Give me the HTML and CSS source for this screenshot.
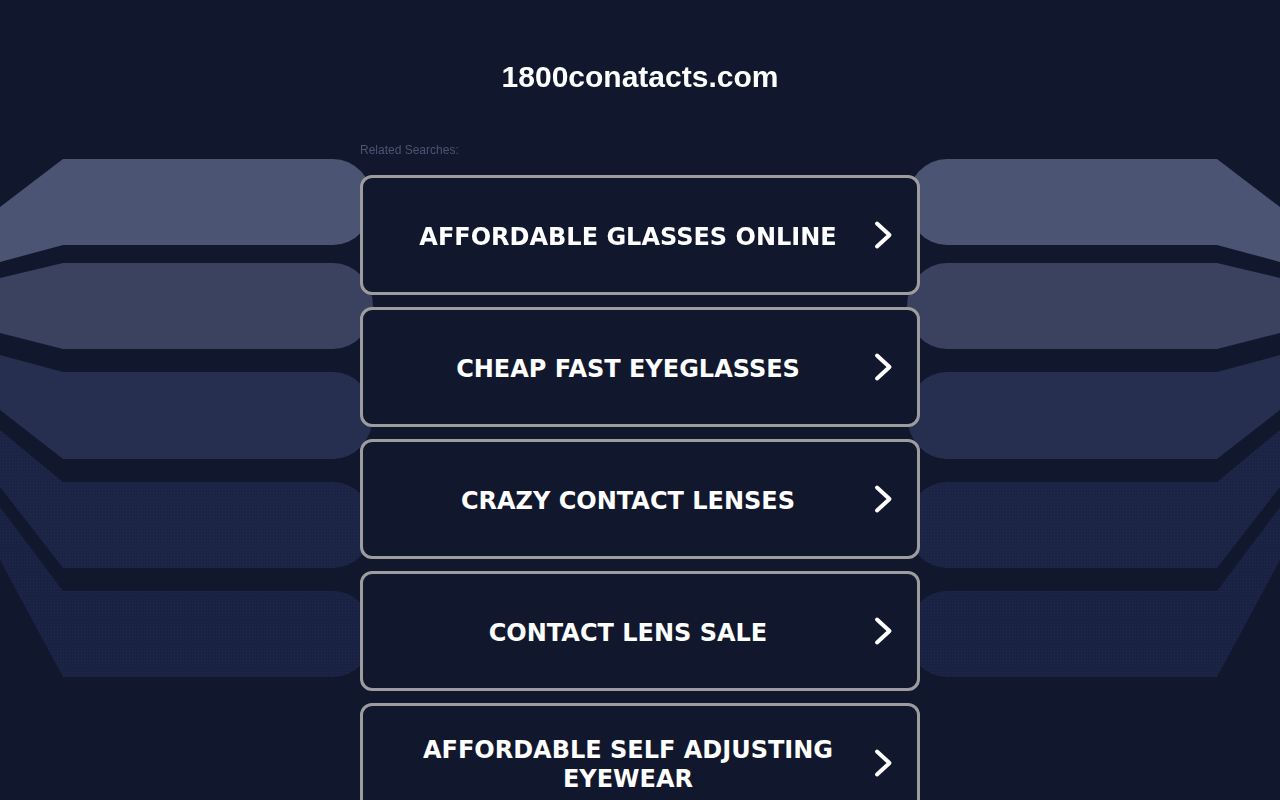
FILE: index.html
```html
<!DOCTYPE html>
<html lang="en">
<head>
<meta charset="utf-8">
<title>1800conatacts.com</title>
<link rel="stylesheet" href="styles.css">
</head>
<body>
<svg class="bg" width="1280" height="800" viewBox="0 0 1280 800" aria-hidden="true">
  <defs>
    <pattern id="dots4" width="3" height="3" patternUnits="userSpaceOnUse">
      <rect width="3" height="3" fill="#1c2445"/>
      <rect width="1" height="1" fill="#222b4e"/>
    </pattern>
    <pattern id="dots5" width="3" height="3" patternUnits="userSpaceOnUse">
      <rect width="3" height="3" fill="#1a2243"/>
      <rect width="1" height="1" fill="#20294b"/>
    </pattern>
    <g id="bands">
      <path fill="#4b5573" d="M0,207 L63,159 L333,159 A40,43 0 0 1 333,245 L63,245 L0,262 Z"/>
      <path fill="#3a4260" d="M0,278 L63,263 L333,263 A40,43 0 0 1 333,349 L63,349 L0,333 Z"/>
      <path fill="#262f4f" d="M0,355 L63,372 L333,372 A40,43.5 0 0 1 333,459 L63,459 L0,410 Z"/>
      <path fill="url(#dots4)" d="M0,430 L63,482 L333,482 A40,43 0 0 1 333,568 L63,568 L0,487 Z"/>
      <path fill="url(#dots5)" d="M0,507 L63,591 L333,591 A40,43 0 0 1 333,677 L63,677 L0,560 Z"/>
    </g>
  </defs>
  <use href="#bands"/>
  <use href="#bands" transform="translate(1280,0) scale(-1,1)"/>
</svg>

<main class="page">
  <h1 class="title">1800conatacts.com</h1>
  <div class="related">Related Searches:</div>
  <ul class="links">
    <li><a class="link" href="#"><span class="label">AFFORDABLE GLASSES ONLINE</span><svg class="chev" viewBox="0 0 24 24" width="24" height="24"><polyline points="5,0.5 17.5,12 5,23.5"/></svg></a></li>
    <li><a class="link" href="#"><span class="label">CHEAP FAST EYEGLASSES</span><svg class="chev" viewBox="0 0 24 24" width="24" height="24"><polyline points="5,0.5 17.5,12 5,23.5"/></svg></a></li>
    <li><a class="link" href="#"><span class="label">CRAZY CONTACT LENSES</span><svg class="chev" viewBox="0 0 24 24" width="24" height="24"><polyline points="5,0.5 17.5,12 5,23.5"/></svg></a></li>
    <li><a class="link" href="#"><span class="label">CONTACT LENS SALE</span><svg class="chev" viewBox="0 0 24 24" width="24" height="24"><polyline points="5,0.5 17.5,12 5,23.5"/></svg></a></li>
    <li><a class="link" href="#"><span class="label">AFFORDABLE SELF ADJUSTING EYEWEAR</span><svg class="chev" viewBox="0 0 24 24" width="24" height="24"><polyline points="5,0.5 17.5,12 5,23.5"/></svg></a></li>
  </ul>
</main>
</body>
</html>
```

FILE: styles.css
```css
html, body {
  margin: 0;
  padding: 0;
  background: #11172c;
}

body {
  font-family: "Liberation Sans", Arial, sans-serif;
  color: #ffffff;
}

.bg {
  position: fixed;
  left: 0;
  top: 0;
  z-index: 0;
}

.page {
  position: relative;
  z-index: 1;
  width: 560px;
  margin: 0 auto;
  padding-top: 60px;
}

.title {
  margin: 0;
  font-size: 30px;
  line-height: 34px;
  font-weight: bold;
  text-align: center;
  color: #ffffff;
}

.related {
  margin-top: 49px;
  font-size: 12px;
  line-height: 14px;
  color: #4b5573;
}

.links {
  list-style: none;
  margin: 18px 0 0;
  padding: 0;
  display: flex;
  flex-direction: column;
  gap: 12px;
}

.link {
  box-sizing: border-box;
  height: 120px;
  display: flex;
  align-items: center;
  padding: 0 21.5px;
  border: 3px solid #9d9d9f;
  border-radius: 12px;
  background: #11172c;
  text-decoration: none;
  color: #ffffff;
}

.label {
  flex: 1;
  padding-top: 4px;
  text-align: center;
  font-family: "DejaVu Sans", Verdana, sans-serif;
  font-weight: bold;
  font-size: 24px;
  line-height: 29px;
}

.chev {
  flex: 0 0 24px;
  overflow: visible;
  fill: none;
  stroke: #ffffff;
  stroke-width: 4;
  stroke-linecap: round;
  stroke-linejoin: round;
}
```
